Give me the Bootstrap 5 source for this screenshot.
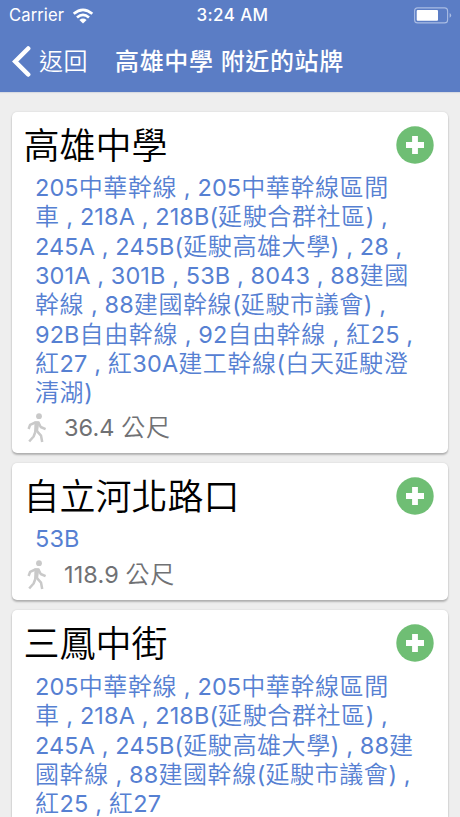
<!DOCTYPE html>
<html lang="zh-Hant">
<head>
<meta charset="utf-8">
<meta name="viewport" content="width=device-width, initial-scale=1">
<title>高雄中學 附近的站牌</title>
<link href="https://cdn.jsdelivr.net/npm/bootstrap@5.3.0/dist/css/bootstrap.min.css" rel="stylesheet">
<style>
body{background:#eee;font-family:Inter,"Noto Sans CJK TC",sans-serif;height:817px;overflow:hidden}
.top-area{background:#5b7dc5;height:92px;box-shadow:0 1px 1px #d8dbe2}
.status-row{height:31px;font-size:16.6px;line-height:31px;padding:0 6px 0 9px}
.carrier{letter-spacing:.1px}
.clock{font-weight:500;font-size:17px;letter-spacing:.4px;margin-left:2px}
.title-row{height:61px;font-size:24px;line-height:61px;letter-spacing:.45px;padding-left:12px}
.back-label{font-weight:350;margin-left:8px;width:76px}
.screen-title{font-weight:500;letter-spacing:.65px}
.stops{padding:20px 12px 0;gap:10px;height:725px;overflow:hidden}
.stop-card{border:0;border-radius:5px;box-shadow:0 2px 2px rgba(0,0,0,.24),0 0 2px rgba(0,0,0,.12);padding:0 14px 0 12px;flex-shrink:0}
.stop-card.open-end{border-radius:5px 5px 0 0;height:207px}
.stop-head{height:61px}
.stop-head svg{margin-top:14px}
.stop-name{font-size:36px;line-height:61px;padding-top:4px;letter-spacing:0;color:#000;font-weight:350;margin-left:-.5px!important}
.routes{color:#5680d2;font-size:24px;line-height:29.33px;letter-spacing:.6px;font-weight:350;padding-left:11px;white-space:nowrap}
.routes div{height:29.33px}
.lat{font-size:23.5px;font-weight:400;letter-spacing:.1px;white-space:pre}
.distance{height:45.3px;color:#707174;font-size:24px;font-weight:350;line-height:40px;letter-spacing:.6px}
.distance svg{margin:5px 17px 0 3px}
.short-list .distance{height:46.6px;padding-top:1.5px}
.open-end .routes{padding-top:1px}
</style>
<script src="https://cdn.jsdelivr.net/npm/bootstrap@5.3.0/dist/js/bootstrap.bundle.min.js"></script>
</head>
<body>
<svg class="d-none"><defs>
<symbol id="add" viewBox="0 0 38 38"><circle cx="19" cy="19" r="18.7" fill="#6fbe74"/><path d="M16.1 10h5.8v6.1H28v5.8h-6.1V28h-5.8v-6.1H10v-5.8h6.1z" fill="#fff"/></symbol>
<symbol id="walk" viewBox="0 0 20 30"><circle cx="12" cy="3.2" r="2.9" fill="#c9c9c9"/><path d="M1.6 16L3.1 11.8L8.3 9.5L11.5 9.6L13.7 14L18.6 16.2M8.3 19L6.6 23.5L2.2 28.5M10.2 18.3L14 22.6L15.2 29" fill="none" stroke="#c9c9c9" stroke-width="2.5" stroke-linejoin="round"/><path d="M7.6 8.4L12.4 8.7L11 18.8L7 19.2Z" fill="#c9c9c9"/></symbol>
</defs></svg>
<header class="top-area text-white">
  <div class="status-row d-flex align-items-center">
    <div class="col d-flex align-items-center"><span class="carrier">Carrier</span>
      <svg class="ms-2" width="22" height="16" viewBox="0 0 22 16"><g fill="none" stroke="#fff" stroke-width="2.7"><path d="M1.7 5.8Q11-2.2 20.3 5.8"/><path d="M5 9.4Q11 4.2 17 9.4"/></g><path d="M7.4 11.9Q11 9.1 14.6 11.9L11 15.6Z" fill="#fff"/></svg></div>
    <div class="clock">3:24 AM</div>
    <div class="col d-flex justify-content-end"><svg width="40" height="17" viewBox="0 0 40 17"><rect x=".6" y=".9" width="33" height="15" rx="3" fill="none" stroke="#a9bce3" stroke-width="1.1"/><rect x="2.7" y="3" width="21.3" height="10.8" rx="1" fill="#fff"/><path d="M35.6 6v4.8q1.6-1 1.6-2.4T35.6 6" fill="#a9bce3"/></svg></div>
  </div>
  <div class="title-row d-flex align-items-center">
    <svg width="19" height="31" viewBox="0 0 19 31"><path d="M16.2 2.5L3.2 15.5L16.2 28.5" fill="none" stroke="#fff" stroke-width="4.5" stroke-linecap="round" stroke-linejoin="miter"/></svg>
    <span class="back-label">返回</span><span class="screen-title">高雄中學 附近的站牌</span>
  </div>
</header>
<main class="stops d-flex flex-column">
  <section class="card stop-card">
    <div class="stop-head d-flex justify-content-between"><h1 class="stop-name m-0">高雄中學</h1><svg width="38" height="38"><use href="#add"/></svg></div>
    <div class="routes"><div>205中華幹線 , 205中華幹線區間</div><div>車 , 218A , 218B(延駛合群社區) ,</div><div>245A , 245B(延駛高雄大學) , 28 ,</div><div>301A , 301B , 53B , 8043 , 88建國</div><div>幹線 , 88建國幹線(延駛市議會) ,</div><div>92B自由幹線 , 92自由幹線 , 紅25 ,</div><div>紅27 , 紅30A建工幹線(白天延駛澄</div><div>清湖)</div></div>
    <div class="distance d-flex align-items-start"><svg width="20" height="30"><use href="#walk"/></svg><span>36.4 公尺</span></div>
  </section>
  <section class="card stop-card short-list">
    <div class="stop-head d-flex justify-content-between"><h1 class="stop-name m-0">自立河北路口</h1><svg width="38" height="38"><use href="#add"/></svg></div>
    <div class="routes"><div>53B</div></div>
    <div class="distance d-flex align-items-start"><svg width="20" height="30"><use href="#walk"/></svg><span>118.9 公尺</span></div>
  </section>
  <section class="card stop-card open-end">
    <div class="stop-head d-flex justify-content-between"><h1 class="stop-name m-0">三鳳中街</h1><svg width="38" height="38"><use href="#add"/></svg></div>
    <div class="routes"><div>205中華幹線 , 205中華幹線區間</div><div>車 , 218A , 218B(延駛合群社區) ,</div><div>245A , 245B(延駛高雄大學) , 88建</div><div>國幹線 , 88建國幹線(延駛市議會) ,</div><div>紅25 , 紅27</div></div>
  </section>
</main>
<script>
/* Latin runs get tighter metrics than the Chinese text around them */
document.querySelectorAll('.routes div, .distance span').forEach(function(el){
  el.innerHTML = el.textContent.replace(/[\x20-\x7e]+/g, '<span class="lat">$&</span>');
});
</script>
</body>
</html>
